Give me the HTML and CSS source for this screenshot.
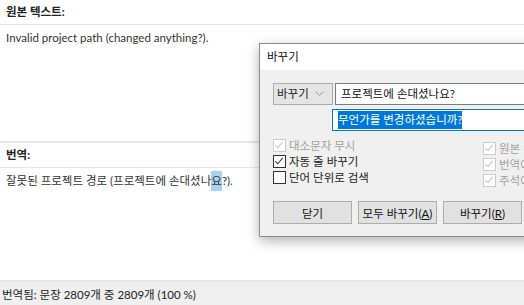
FILE: index.html
```html
<!DOCTYPE html>
<html lang="ko">
<head>
  <meta charset="UTF-8">
  <title>번역</title>
  <link rel="stylesheet" href="styles.css">
</head>
<body>
  <div class="app">
    <!-- Source pane -->
    <div class="pane pane-source">
      <div class="pane-head">원본 텍스트:</div>
      <div class="pane-body">Invalid project path (changed anything?).</div>
    </div>

    <!-- Translation pane -->
    <div class="pane pane-target">
      <div class="pane-head">번역:</div>
      <div class="pane-body">잘못된 프로젝트 경로 (프로젝트에 손대셨나<span class="hit">요</span>?).</div>
    </div>

    <!-- Status bar -->
    <div class="status">번역됨: 문장 2809개 중 2809개 (100 %)</div>

    <!-- Replace dialog -->
    <div class="dialog">
      <div class="dialog-title">바꾸기</div>
      <div class="dialog-body">
        <div class="row">
          <div class="combo">바꾸기 <span class="caret">
            <svg width="9" height="6" viewBox="0 0 9 6"><path d="M0.5 0.5 L4.5 4.5 L8.5 0.5" fill="none" stroke="#999" stroke-width="1"/></svg>
          </span></div>
          <div class="field">프로젝트에 손대셨나요?</div>
        </div>
        <div class="row row-replace">
          <div class="field field-focus"><span class="sel">무언가를 변경하셨습니까?</span></div>
        </div>

        <div class="options">
          <div class="opt-col">
            <div class="opt disabled"><span class="box checked"></span>대소문자 무시</div>
            <div class="opt"><span class="box checked"></span>자동 줄 바꾸기</div>
            <div class="opt"><span class="box"></span>단어 단위로 검색</div>
          </div>
          <div class="opt-col opt-col-right">
            <div class="opt disabled"><span class="box checked"></span>원본 -</div>
            <div class="opt disabled"><span class="box checked"></span>번역에서</div>
            <div class="opt disabled"><span class="box checked"></span>주석에서</div>
          </div>
        </div>

        <div class="buttons">
          <button class="btn">닫기</button>
          <button class="btn">모두 바꾸기(<u>A</u>)</button>
          <button class="btn">바꾸기(<u>R</u>)</button>
        </div>
      </div>
    </div>
  </div>
</body>
</html>
```

FILE: styles.css
```css
body {
  margin: 0;
  padding: 0;
  font-family: 'Lato', 'Noto Sans CJK KR', sans-serif;
  font-size: 11.5px;
  color: #222;
  background-color: white;
  overflow: hidden;
}

.app {
  position: relative;
  width: 524px;
  height: 305px;
  display: flex;
  flex-direction: column;
  overflow: hidden;
}

/* Panes */
.pane {
  display: flex;
  flex-direction: column;
}

.pane-source {
  height: 143px;
  border-bottom: 2px solid #e6e6e6;
}

.pane-target {
  height: 139px;
  border-bottom: 2px solid #e6e6e6;
}

.pane-head {
  height: 24px;
  line-height: 24px;
  padding-left: 6px;
  font-weight: bold;
  border-bottom: 1px solid #e6e6e6;
}

.pane-body {
  padding: 5px 6px;
  line-height: 16px;
  color: #333;
}

.hit {
  background-color: #a9d1f2;
  padding: 3px 0 4px;
}

/* Status bar */
.status {
  flex: 1;
  background-color: #efefef;
  padding: 2px 0 0 2px;
  line-height: 21px;
  color: #222;
}

/* Dialog */
.dialog {
  position: absolute;
  left: 259px;
  top: 43px;
  width: 340px;
  border: 1px solid #8c8c8c;
  background-color: #f0f0f0;
  box-shadow: 0 4px 12px rgba(0, 0, 0, 0.3);
}

.dialog-title {
  height: 26px;
  line-height: 26px;
  padding-left: 7px;
  background-color: white;
  color: #111;
}

.dialog-body {
  padding: 13px 12px 12px 13px;
}

.row {
  display: flex;
  gap: 2px;
}

.row-replace {
  margin-top: 4px;
  padding-left: 59px;
}

.combo {
  width: 55px;
  height: 20px;
  line-height: 20px;
  padding-left: 3px;
  border: 1px solid #adadad;
  background-color: #e5e5e5;
  display: flex;
  align-items: center;
  gap: 6px;
  color: #222;
}

.caret {
  display: flex;
}

.field {
  flex: 1;
  height: 20px;
  line-height: 20px;
  padding-left: 5px;
  border: 1px solid #7a7a7a;
  background-color: white;
  color: #111;
}

.field-focus {
  border-color: #0078d7;
}

.sel {
  background-color: #0078d7;
  color: white;
  padding: 2px 0 3px;
}

/* Options */
.options {
  display: flex;
  margin-top: 6px;
}

.opt-col {
  width: 210px;
  flex-shrink: 0;
  display: flex;
  flex-direction: column;
}

.opt-col-right {
  padding-top: 3px;
}

.opt {
  height: 16px;
  display: flex;
  align-items: center;
  gap: 3px;
}

.opt.disabled {
  color: #a0a0a0;
}

.box {
  width: 11px;
  height: 11px;
  border: 1px solid #333;
  background-color: white;
  position: relative;
}

.opt.disabled .box {
  border-color: #cccccc;
}

.box.checked::after {
  content: '';
  position: absolute;
  left: 3px;
  top: 0px;
  width: 3px;
  height: 7px;
  border: solid #333;
  border-width: 0 1px 1px 0;
  transform: rotate(40deg);
}

.opt.disabled .box.checked::after {
  border-color: #c4c4c4;
}

/* Buttons */
.buttons {
  display: flex;
  gap: 6px;
  margin-top: 13px;
}

.btn {
  width: 79px;
  height: 23px;
  padding: 0;
  border: 1px solid #adadad;
  background-color: #e1e1e1;
  font-family: inherit;
  font-size: 11.5px;
  color: #111;
}
```
